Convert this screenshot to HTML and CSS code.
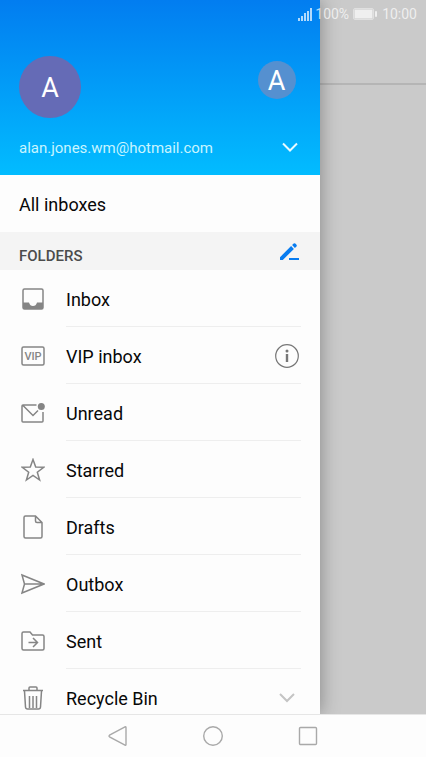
FILE: index.html
```html
<!DOCTYPE html>
<html lang="en">
<head>
<meta charset="utf-8">
<meta name="viewport" content="width=device-width, initial-scale=1">
<title>Mail</title>
<link rel="stylesheet" href="styles.css">
</head>
<body>
<div class="screen">
  <div class="status">
    <svg class="signal" width="14" height="14" viewBox="0 0 14 14" aria-hidden="true"><path d="M1 14v-3M4 14v-5M7 14V6M10 14V4M13 14V1"/></svg>
    <span>100%</span>
    <svg class="battery" width="24" height="12" viewBox="0 0 24 12" aria-hidden="true"><rect class="shell" x=".5" y=".5" width="20" height="11" rx="1.5"/><rect x="1.500" y="1.500" width="18" height="9"/><rect x="22" y="3" width="2" height="6" rx="1"/></svg>
    <span>10:00</span>
  </div>
  <main class="stage">
    <aside class="drawer">
      <header class="account">
        <div class="avatars">
          <button class="avatar">A</button>
          <button class="avatar small">A</button>
        </div>
        <div class="address">
          <span>alan.jones.wm@hotmail.com</span>
          <button class="icon-button" aria-label="Show accounts"><svg width="18" height="12" viewBox="0 0 18 12"><path class="chevron light" d="M2 1.500l7 7 7-7"/></svg></button>
        </div>
      </header>
      <a class="all" href="#all">All inboxes</a>
      <div class="section">
        <h2>FOLDERS</h2>
        <button class="icon-button" aria-label="Edit folders"><svg width="22" height="22" viewBox="0 0 22 22"><path class="pencil" d="M2 17.200L13.100 6.100l2.800 2.800L4.800 20H2zM14.100 5.100l1.600-1.500q.8-.6 1.600 0l1.200 1.200q.6.8 0 1.600l-1.600 1.500zM11 18h10v2h-10z"/></svg></button>
      </div>
      <nav aria-label="Folders">
        <ul class="folders">
          <li>
            <svg class="icon" viewBox="0 0 24 24"><rect x="2" y="2" width="20" height="20" rx="1.5"/><path class="solid" d="M2 15.500h6q1 3.500 4 3.500t4-3.500h6V21q0 1-1 1H3q-1 0-1-1z"/></svg>
            <div class="row"><a href="#inbox">Inbox</a></div>
          </li>
          <li>
            <svg class="icon" viewBox="0 0 24 24"><rect x="1" y="3" width="22" height="18" rx="1.5"/><text x="12" y="16" text-anchor="middle">VIP</text></svg>
            <div class="row"><a href="#vip">VIP inbox</a><button class="icon-button" aria-label="About VIP inbox"><svg class="info" width="26" height="26" viewBox="0 0 26 26"><circle cx="13" cy="13" r="11.3"/><path d="M13 11v8"/><circle class="dot" cx="13" cy="8" r="1.5"/></svg></button></div>
          </li>
          <li>
            <svg class="icon" viewBox="0 0 24 24"><path d="M15.500 4H2q-1 0-1 1v15q0 1 1 1h19q1 0 1-1V11M2 4.500l10 10 5-5"/><circle class="solid" cx="20.300" cy="5.400" r="3.500"/></svg>
            <div class="row"><a href="#unread">Unread</a></div>
          </li>
          <li>
            <svg class="icon" viewBox="0 0 24 24"><path d="M12 1.500l2.700 7.600 8 .2-6.400 4.900 2.300 7.800-6.600-4.600L5.400 22l2.300-7.800L1.300 9.300l8-.2z"/></svg>
            <div class="row"><a href="#starred">Starred</a></div>
          </li>
          <li>
            <svg class="icon" viewBox="0 0 24 24"><path d="M14.500 1H4.500Q3 1 3 2.500v19Q3 23 4.500 23h15q1.500 0 1.500-1.500V7.500zM14.500 1v5q0 1.500 1.500 1.500h5"/></svg>
            <div class="row"><a href="#drafts">Drafts</a></div>
          </li>
          <li>
            <svg class="icon" viewBox="0 0 24 24"><path d="M1 3l22 9L1 21l2.500-9zM3.500 12H23"/></svg>
            <div class="row"><a href="#outbox">Outbox</a></div>
          </li>
          <li>
            <svg class="icon" viewBox="0 0 24 24"><path d="M2.500 3H9l2.500 3h10Q23 6 23 7.500v12q0 1.500-1.500 1.500h-19Q1 21 1 19.500v-15Q1 3 2.500 3zM7.500 13.500h9M12 9l4.500 4.500L12 18"/></svg>
            <div class="row"><a href="#sent">Sent</a></div>
          </li>
          <li>
            <svg class="icon" viewBox="0 0 24 24"><path d="M2 4.500h20M8 4V2q0-1 1-1h6q1 0 1 1v2M3.500 5l1 16q.2 2 2 2h11q1.800 0 2-2l1-16M8.500 10v12M12 10v12M15.500 10v12"/></svg>
            <div class="row"><a href="#bin">Recycle Bin</a><button class="icon-button" aria-label="Expand Recycle Bin"><svg width="26" height="12" viewBox="0 0 26 12"><path class="chevron" d="M6 2l7 7 7-7"/></svg></button></div>
          </li>
        </ul>
      </nav>
    </aside>
    <div class="backdrop"><div class="toolbar"></div></div>
  </main>
  <footer class="system">
    <button aria-label="Back"><svg width="22" height="22" viewBox="0 0 22 22"><path d="M2.500 10.200L18 1.800q1-.4 1 .7v17q0 1.100-1 .7L2.500 11.800q-1-.8 0-1.600z"/></svg></button>
    <button aria-label="Home"><svg width="22" height="22" viewBox="0 0 22 22"><circle cx="11" cy="11" r="9.300"/></svg></button>
    <button aria-label="Recent apps"><svg width="22" height="22" viewBox="0 0 22 22"><rect x="2.500" y="2.500" width="17" height="17" rx="1"/></svg></button>
  </footer>
</div>
</body>
</html>
```
FILE: styles.css
```css
* { box-sizing: border-box; }
body {
  margin: 0;
  font-family: Roboto, "Liberation Sans", sans-serif;
  font-size: 18px;
  line-height: 24px;
  color: #080808;
  background: #fdfdfd;
}
button {
  border: 0;
  padding: 0;
  background: none;
  font: inherit;
  color: inherit;
}
a { color: inherit; text-decoration: none; }
svg { display: block; }
.screen {
  position: relative;
  display: flex;
  flex-direction: column;
  height: 100vh;
}
.status {
  position: absolute;
  z-index: 2;
  top: 0;
  right: 9px;
  display: flex;
  align-items: center;
  height: 28px;
  font-size: 14px;
  color: rgba(255, 255, 255, .7);
}
.signal { margin-right: 3px; fill: none; stroke: currentColor; stroke-width: 2; }
.battery { margin: 0 5px 0 4px; fill: currentColor; }
.battery .shell { fill: none; stroke: currentColor; opacity: .6; }
.stage { display: flex; flex: 1; min-height: 0; }
.drawer {
  z-index: 1;
  width: 75%;
  overflow: hidden;
  background: #fdfdfd;
  box-shadow: 0 0 18px rgba(0, 0, 0, .35);
}
.account {
  padding: 56px 21px 15px 19px;
  color: #fff;
  background: linear-gradient(#027df0, #02bcff);
}
.avatars { display: flex; justify-content: space-between; }
.avatar {
  width: 62px;
  height: 62px;
  padding-top: 2px;
  border-radius: 50%;
  font-size: 27px;
  background: #656bb6;
}
.avatar.small {
  width: 38px;
  height: 38px;
  margin: 5px 3px 0 0;
  background: #5590d0;
}
.address {
  display: flex;
  align-items: center;
  justify-content: space-between;
  margin-top: 18px;
  font-size: 15px;
  color: #c8f5ff;
}
.chevron { fill: none; stroke: #c4c4c4; stroke-width: 2; }
.chevron.light { stroke: #e8fbff; }
.all { display: block; padding: 18px 19px 15px; }
.section {
  display: flex;
  align-items: center;
  justify-content: space-between;
  height: 38px;
  padding: 0 20px 0 19px;
  background: #f4f4f4;
}
.section h2 {
  margin: 10px 0 0;
  font-size: 15px;
  font-weight: 500;
  color: #4c4c4c;
}
.pencil { fill: #087cf0; }
.folders { margin: 0; padding: 0; list-style: none; }
.folders li {
  display: flex;
  align-items: center;
  gap: 21px;
  padding: 0 19px 0 21px;
}
.icon {
  flex: none;
  width: 24px;
  height: 24px;
  fill: none;
  stroke: #858585;
  stroke-width: 1.5;
}
.icon .solid { fill: #858585; stroke: none; }
.icon text { fill: #858585; stroke: none; font-size: 11px; font-weight: 500; }
.row {
  display: flex;
  flex: 1;
  align-items: center;
  justify-content: space-between;
  height: 57px;
  padding: 2px 1px 0 0;
  border-bottom: 1px solid #eee;
}
.row a { padding-top: 2px; }
.info { fill: none; stroke: #777; stroke-width: 1.2; }
.info path { stroke-width: 2.4; }
.info .dot { fill: #777; stroke: none; }
.backdrop { flex: 1; background: #cacaca; }
.toolbar { height: 85px; border-bottom: 2px solid #b5b5b5; }
.system {
  z-index: 2;
  display: flex;
  align-items: center;
  justify-content: center;
  gap: 73px;
  height: 43px;
  border-top: 1px solid #e6e6e6;
  background: #fdfdfd;
}
.system svg { fill: none; stroke: #a9a9a9; stroke-width: 1.4; }
```
